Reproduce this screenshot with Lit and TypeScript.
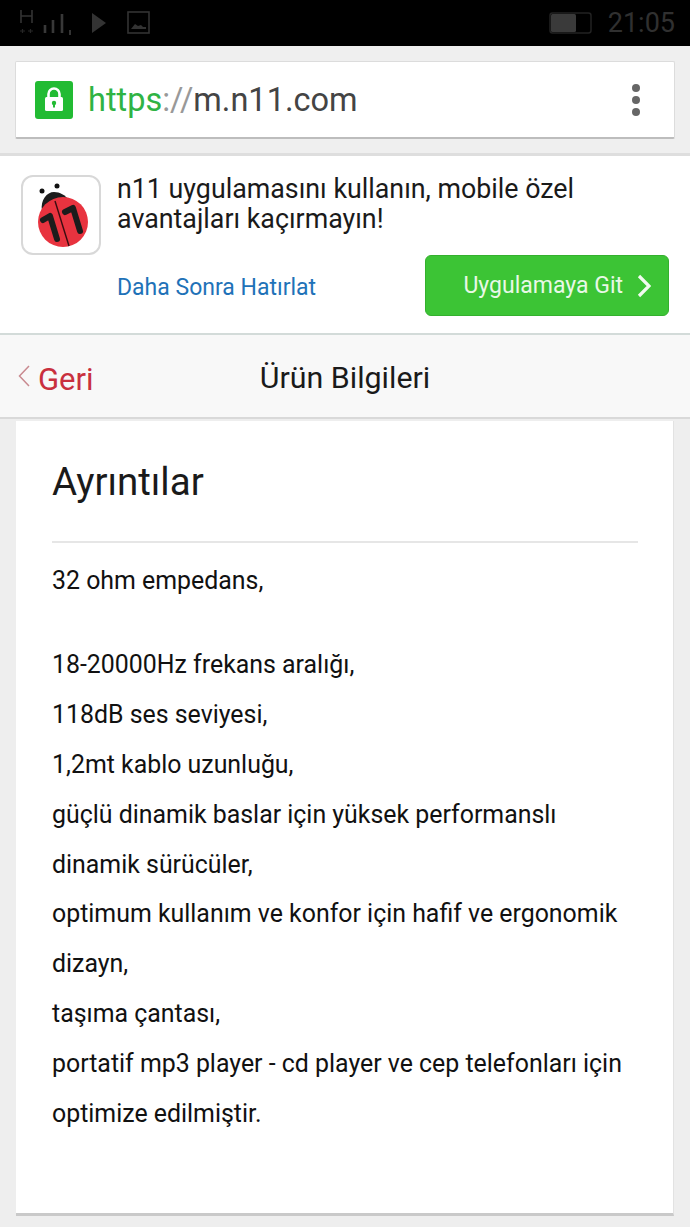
import { html, LitElement, css } from 'lit';
import { customElement } from 'lit/decorators.js';

@customElement('app-root')
export class AppRoot extends LitElement {
  static styles = css`
    :host {
      display: block;
      width: 690px;
      height: 1227px;
      overflow: hidden;
      background: #eeeeee;
      font-family: Roboto, sans-serif;
      color: #111;
    }
    .status {
      height: 46px;
      background: #000;
      display: flex;
      align-items: center;
      padding: 0 15px 0 20px;
    }
    .status svg { display: block; }
    .status .spacer { flex: 1; }
    .clock { font-size: 27px; margin-left: 15px; color: #303030; line-height: 46px; }
    .urlwrap {
      height: 107px;
      box-sizing: border-box;
      padding: 15px 15px 14px;
      background: #efefef;
    }
    .urlbox {
      height: 78px;
      box-sizing: border-box;
      background: #fff;
      border-radius: 2px;
      border: 1px solid #dcdcdc;
      border-bottom: 2px solid #bdbdbd;
      display: flex;
      align-items: center;
      padding: 0 34px 0 19px;
    }
    .lock {
      width: 38px;
      height: 38px;
      border-radius: 3px;
      background: #22bb33;
      display: flex;
      align-items: center;
      justify-content: center;
      margin-right: 15px;
    }
    .url { flex: 1; font-size: 32.5px; color: #444; }
    .url .g { color: #2fb344; }
    .url .s { color: #999; }
    .dots { display: flex; flex-direction: column; gap: 4px; }
    .dots i { width: 8px; height: 8px; border-radius: 50%; background: #666; display: block; }
    .banner {
      height: 182px;
      box-sizing: border-box;
      background: #fff;
      border-top: 3px solid #dedede;
      border-bottom: 2px solid #d3dbd9;
      padding: 19px 21px 0;
      display: flex;
      gap: 16px;
    }
    .appicon {
      width: 80px;
      height: 80px;
      box-sizing: border-box;
      border: 2px solid #d8d8d8;
      border-radius: 12px;
      flex: none;
    }
    .bmain { flex: 1; margin-top: -1px; }
    .bmsg { font-size: 26.8px; line-height: 30px; color: #1a1a1a; }
    .bactions {
      display: flex;
      justify-content: space-between;
      align-items: center;
      margin-top: 21px;
    }
    .later { font-size: 23px; color: #1f72b8; padding-top: 3px; }
    .go {
      width: 244px;
      height: 61px;
      box-sizing: border-box;
      background: #3cc435;
      border: 1px solid #34b02e;
      border-radius: 6px;
      display: flex;
      align-items: center;
      justify-content: flex-end;
      gap: 14px;
      padding-right: 17px;
      color: #e8f8e6;
      font-size: 23px;
    }
    .nav {
      height: 84px;
      box-sizing: border-box;
      background: #f8f8f8;
      border-bottom: 2px solid #d9d9d9;
      display: grid;
      grid-template-columns: 1fr auto 1fr;
      align-items: center;
      padding: 7px 0 0 18px;
    }
    .back { display: flex; align-items: center; gap: 8px; color: #c9303e; font-size: 31px; }
    .back svg { margin-top: -7px; }
    .title { font-size: 30.4px; color: #1a1a1a; margin-top: -4px; transform: translateX(-9px); }
    .card {
      margin: 2px 16px 0 16px;
      height: 795px;
      box-sizing: border-box;
      background: #fff;
      border-bottom: 3px solid #c9c9c9;
      border-right: 1px solid #e2e2e2;
      padding: 0 35px 0 36px;
    }
    h2 {
      margin: 0;
      height: 122px;
      box-sizing: border-box;
      padding-top: 37px;
      font-weight: 400;
      font-size: 38.5px;
      line-height: 48px;
      color: #1a1a1a;
      border-bottom: 2px solid #e6e6e6;
    }
    .body { font-size: 24.9px; line-height: 49.9px; color: #111; padding-top: 13px; }
    .body p { margin: 0 0 34px; }
  `;

  render() {
    return html`
      <div class="status">
        <svg width="56" height="46" viewBox="0 0 56 46" fill="none">
          <path d="M1 10v13M12 10v13M1 16h11" stroke="#333" stroke-width="1.6"/>
          <path d="M0 31h5M2.500 29v4M8 31h5M10.500 29v4" stroke="#262626" stroke-width="1.2"/>
          <path d="M25 25v8M33 20v13M42 14v19" stroke="#383838" stroke-width="2.600"/>
          <path d="M50 30v5" stroke="#333" stroke-width="2"/>
        </svg>
        <svg style="margin-left:16px" width="14" height="20" viewBox="0 0 14 20"><path d="M0 0l14 10L0 20z" fill="#333"/></svg>
        <svg style="margin-left:21px" width="24" height="24" viewBox="0 0 24 24" fill="none">
          <rect x="1" y="1" width="21" height="21" stroke="#333" stroke-width="1.600"/>
          <path d="M4 18l4-5 3 2 3-1 2 2 3 0v2z" fill="#333"/>
        </svg>
        <div class="spacer"></div>
        <svg width="44" height="22" viewBox="0 0 44 22" fill="none">
          <rect x="1" y="1" width="41" height="20" rx="2.500" stroke="#222" stroke-width="1.500"/>
          <rect x="2" y="2" width="25" height="18" rx="1.500" fill="#3a3a3a"/>
        </svg>
        <div class="clock">21:05</div>
      </div>
      <div class="urlwrap">
        <div class="urlbox">
          <div class="lock">
            <svg width="20" height="26" viewBox="0 0 20 26" fill="none">
              <path d="M4.500 11V7a5.500 5.500 0 0 1 11 0v4" stroke="#fff" stroke-width="2.600"/>
              <rect x="1" y="10" width="18" height="14" rx="1.500" fill="#fff"/>
              <circle cx="10" cy="16" r="2.200" fill="#22bb33"/>
              <rect x="9" y="16" width="2" height="4.500" fill="#22bb33"/>
            </svg>
          </div>
          <div class="url"><span class="g">https</span><span class="s">://</span>m.n11.com</div>
          <div class="dots"><i></i><i></i><i></i></div>
        </div>
      </div>
      <div class="banner">
        <div class="appicon">
          <svg width="76" height="76" viewBox="0 0 76 76">
            <circle cx="19" cy="14" r="2.500" fill="#111"/>
            <circle cx="34" cy="9" r="2.500" fill="#111"/>
            <path d="M19 34C17 23 24 15 31 15c6 0 11 3 15 8z" fill="#1c1c1c"/>
            <circle cx="40" cy="45" r="25" fill="#e8333f"/>
            <path d="M32 24l14 45" stroke="#3a0d10" stroke-width="1.400"/>
            <path d="M20 43l7-4 7 23" stroke="#1c1c1c" stroke-width="6" fill="none" stroke-linecap="round" stroke-linejoin="round"/>
            <path d="M42 35l8-4 7 23" stroke="#1c1c1c" stroke-width="6" fill="none" stroke-linecap="round" stroke-linejoin="round"/>
          </svg>
        </div>
        <div class="bmain">
          <div class="bmsg">n11 uygulamasını kullanın, mobile özel<br />avantajları kaçırmayın!</div>
          <div class="bactions">
            <span class="later">Daha Sonra Hatırlat</span>
            <div class="go">
              <span>Uygulamaya Git</span>
              <svg width="14" height="24" viewBox="0 0 14 24" fill="none">
                <path d="M2 2l10 10L2 22" stroke="#f1fbf0" stroke-width="3.200"/>
              </svg>
            </div>
          </div>
        </div>
      </div>
      <div class="nav">
        <div class="back">
          <svg width="12" height="22" viewBox="0 0 12 22" fill="none">
            <path d="M11 1L1.500 11 11 21" stroke="#c98a90" stroke-width="1.500"/>
          </svg>
          <span>Geri</span>
        </div>
        <div class="title">Ürün Bilgileri</div>
        <div></div>
      </div>
      <div class="card">
        <h2>Ayrıntılar</h2>
        <div class="body">
          <p>32 ohm empedans,</p>
          18-20000Hz frekans aralığı,<br />
          118dB ses seviyesi,<br />
          1,2mt kablo uzunluğu,<br />
          güçlü dinamik baslar için yüksek performanslı<br />
          dinamik sürücüler,<br />
          optimum kullanım ve konfor için hafif ve ergonomik<br />
          dizayn,<br />
          taşıma çantası,<br />
          portatif mp3 player - cd player ve cep telefonları için<br />
          optimize edilmiştir.
        </div>
      </div>
    `;
  }
}

declare global {
  interface HTMLElementTagNameMap {
    'app-root': AppRoot;
  }
}
